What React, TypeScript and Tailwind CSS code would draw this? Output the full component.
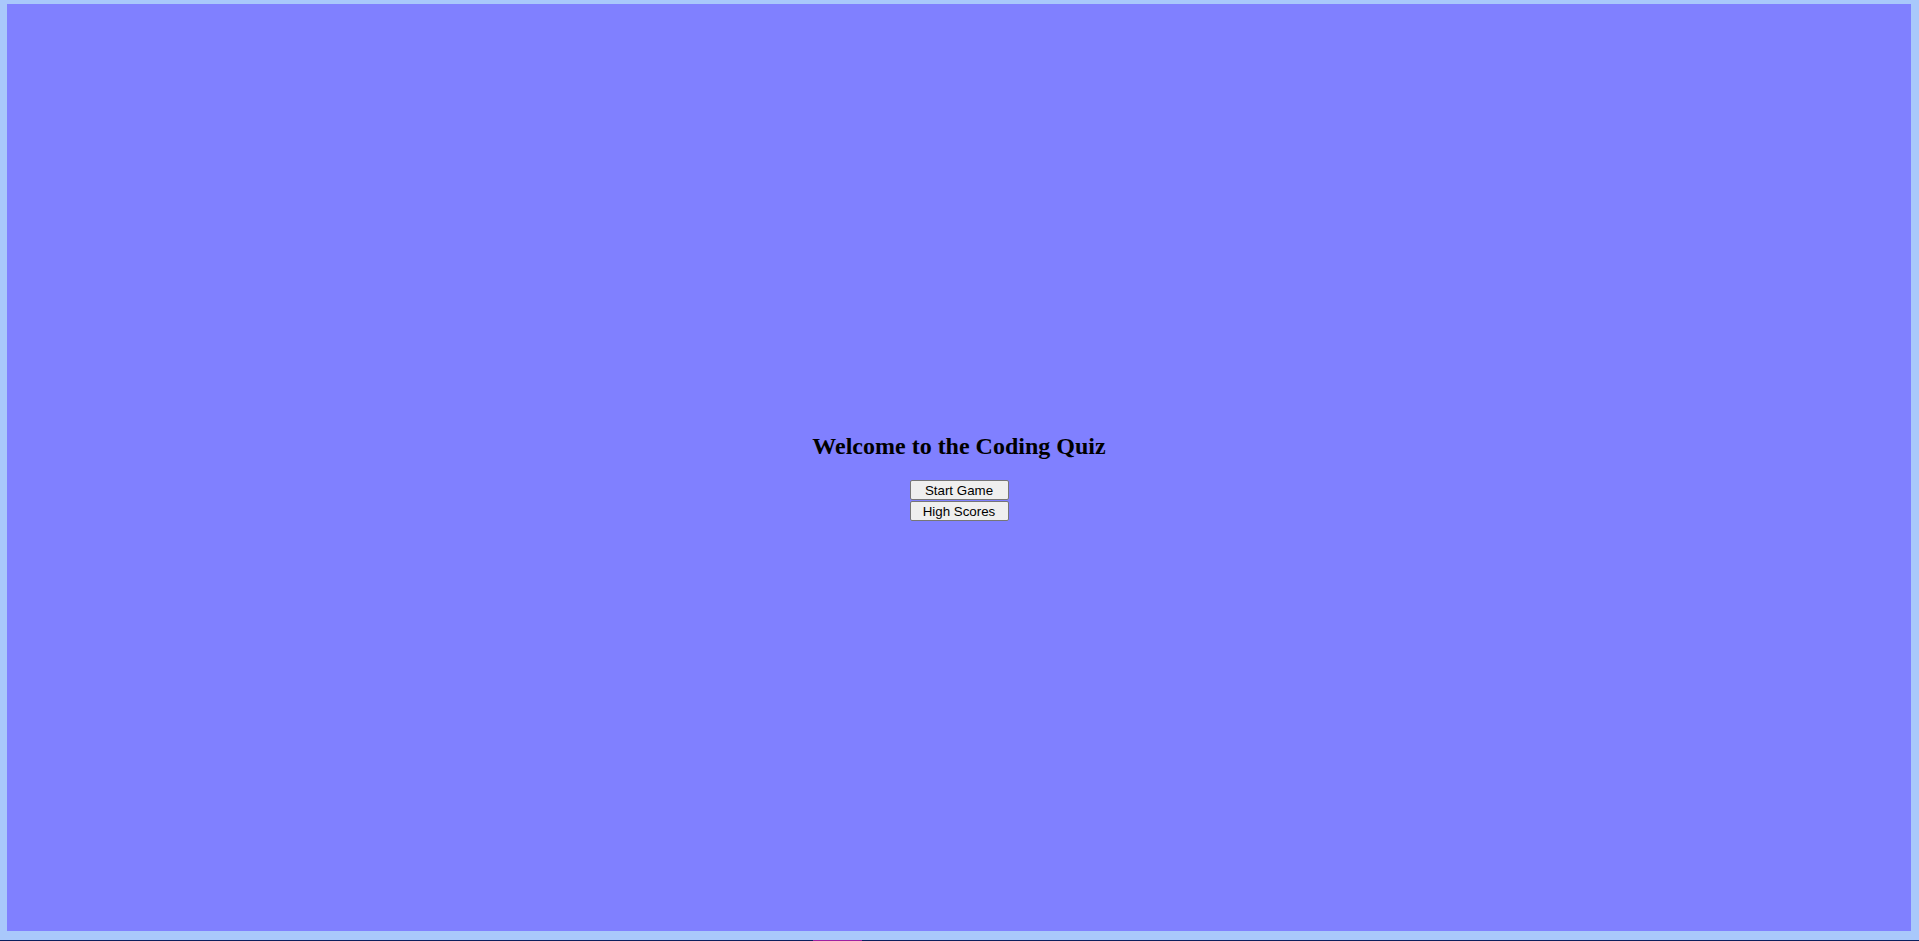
import React from 'react';

export default function App() {
  return (
    <div className="w-[1919px] h-[941px] flex flex-col bg-[#0b1f5e] overflow-hidden">
      <div className="h-[940px] bg-[#a9c8fb] pt-[4px] pl-[7px] pr-[8px] pb-[9px]">
        <div className="h-full bg-[#8080ff] flex flex-col items-center justify-center pb-[2px]">
          <div className="flex flex-col items-center">
            <h2 className="mt-[19px] mb-[20px] text-[24px] leading-[28px] font-bold text-black [font-family:'Liberation_Serif',serif]">
              Welcome to the Coding Quiz
            </h2>
            <button className="w-[99px] h-[20px] bg-[#efefef] border border-[#767676] rounded-[2px] text-[13.33px] text-black [font-family:'Liberation_Sans',Arial,sans-serif]">
              Start Game
            </button>
            <button className="mt-[1px] w-[99px] h-[20px] bg-[#efefef] border border-[#767676] rounded-[2px] text-[13.33px] text-black [font-family:'Liberation_Sans',Arial,sans-serif]">
              High Scores
            </button>
          </div>
        </div>
      </div>
      <div className="h-[1px] flex">
        <div className="w-[813px] bg-[#0b1f5e]" />
        <div className="w-[49px] bg-[#a020a0]" />
        <div className="flex-1 bg-[#0b1f5e]" />
      </div>
    </div>
  );
}
